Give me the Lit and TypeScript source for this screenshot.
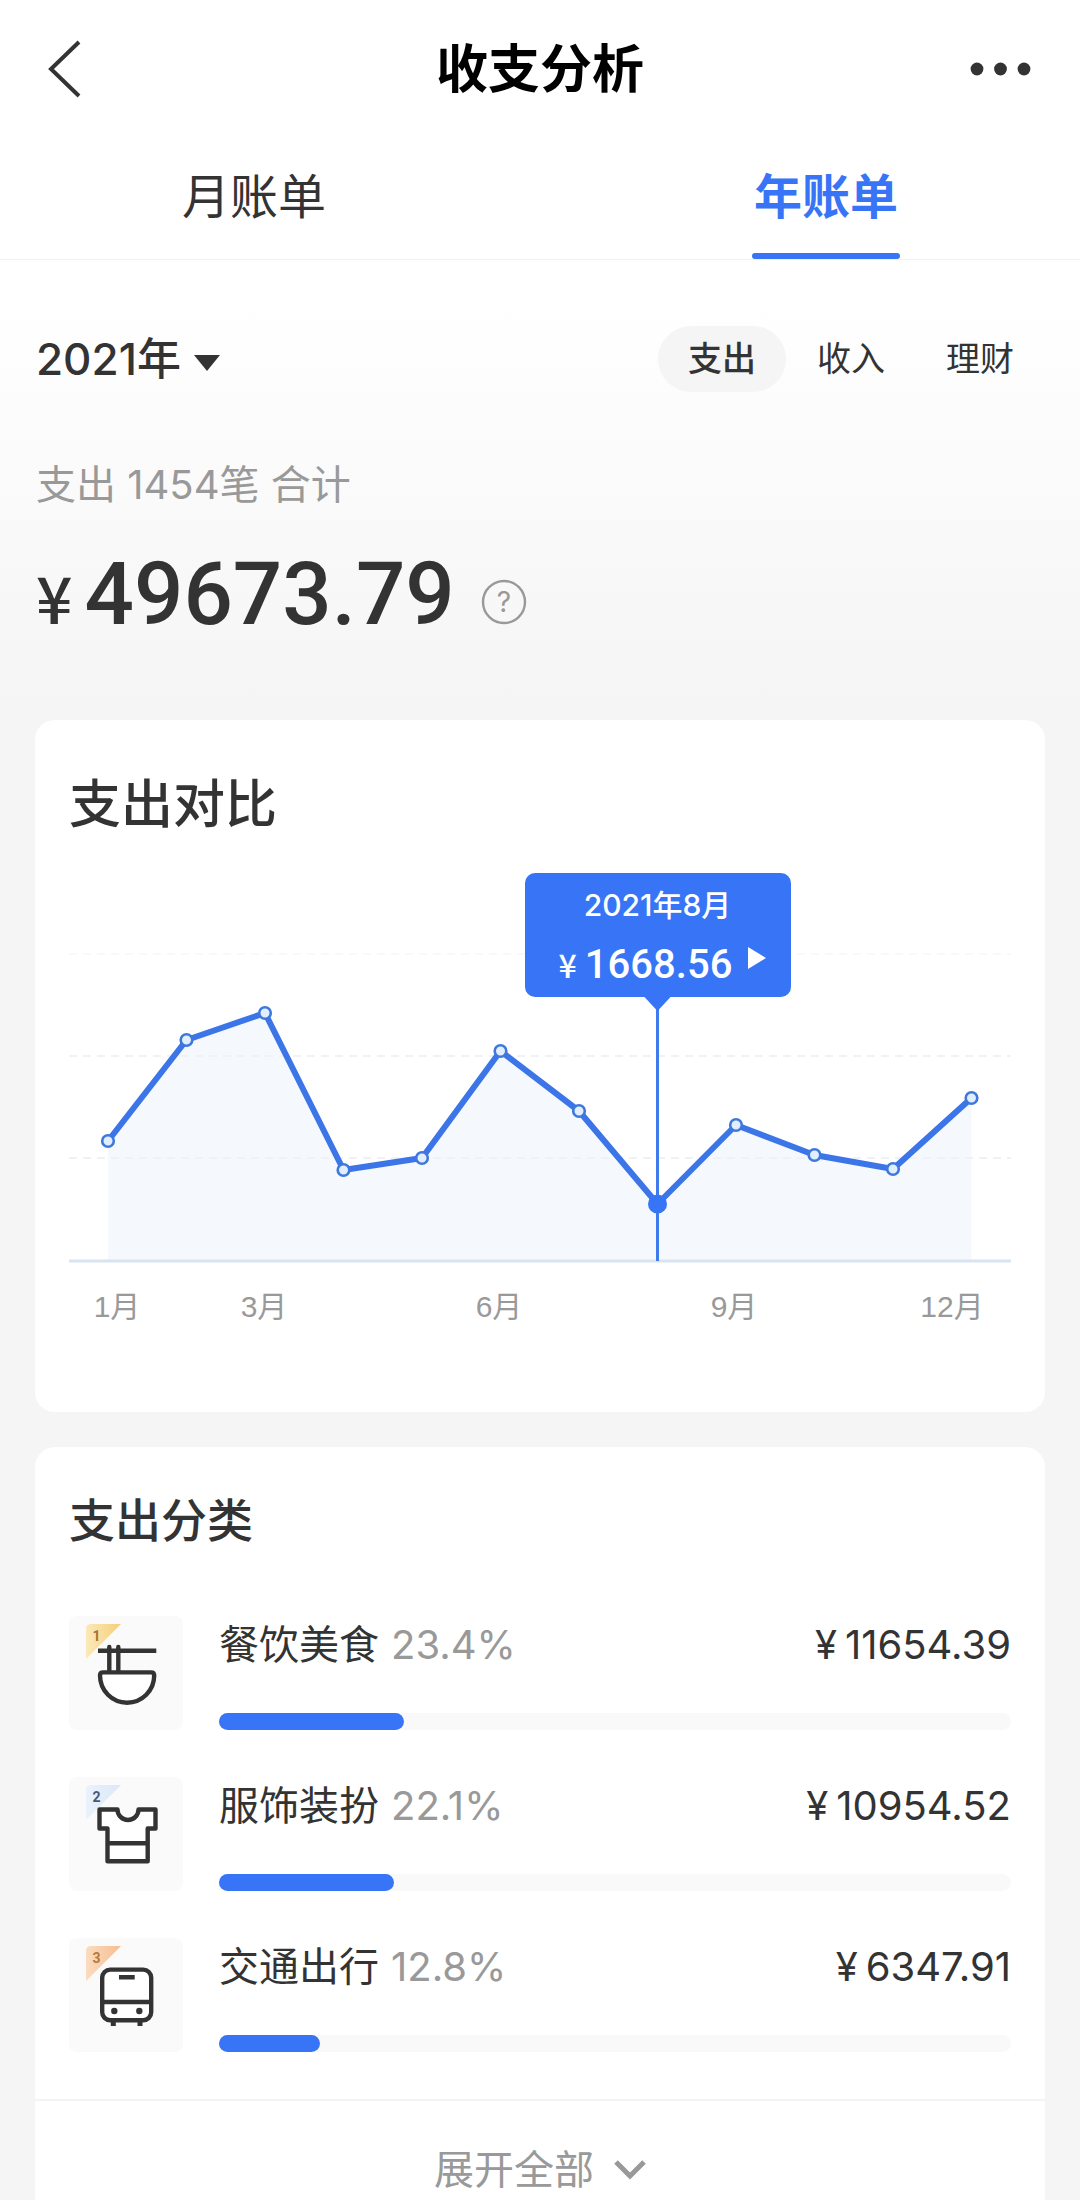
import { LitElement, html, svg, css } from "lit";
import { customElement, property, state } from "lit/decorators.js";
import { classMap } from "lit/directives/class-map.js";

interface Category {
  rank: number;
  name: string;
  percent: number;
  amount: string;
}

const CATEGORIES: Category[] = [
  { rank: 1, name: "餐饮美食", percent: 23.4, amount: "11654.39" },
  { rank: 2, name: "服饰装扮", percent: 22.1, amount: "10954.52" },
  { rank: 3, name: "交通出行", percent: 12.8, amount: "6347.91" },
];

/* Chart geometry, in viewBox units. */
const CHART_W = 942;
const CHART_H = 480;
const AXIS_Y = 408;
const FIRST_X = 39;
const STEP_X = 78.5;
const HEIGHTS = [120, 221, 248, 91, 103, 210, 150, 57, 136, 106, 92, 163];
const LABELS = [
  { text: "1月", x: 48 },
  { text: "3月", x: 195 },
  { text: "6月", x: 430 },
  { text: "9月", x: 665 },
  { text: "12月", x: 883 },
];
const SELECTED = 7;

const BADGES = [
  { from: "#f5cf7a", to: "#fbe9b8", ink: "#a8702f" },
  { from: "#dbe8f8", to: "#eaf2fc", ink: "#46597a" },
  { from: "#f6bd90", to: "#fbdcc0", ink: "#b5793c" },
];

const ICONS = [
  svg`
    <path d="M29 34.7H87.3"/>
    <path d="M40.3 31V56M49.3 31V56" stroke-linecap="round"/>
    <path d="M34 56.4H82Q85.2 56.4 85.2 59.6A27.1 27.1 0 0 1 31 59.6Q31 56.4 34 56.4Z" fill="#fff"/>`,
  svg`
    <path d="M30.5 32.5H48.5A10.5 10.5 0 0 0 69.5 32.5H86.5V51.5H78.7V84.2H38.5V51.5H30.5Z" fill="#fff" stroke-linejoin="round"/>
    <path d="M38.5 66.3H78.7"/>`,
  svg`
    <path d="M44.3 82V88M71 82V88" stroke-width="5"/>
    <rect x="33.2" y="31.6" width="49" height="50.6" rx="8" fill="#fff"/>
    <path d="M33.2 64H82.2M50 39.3H65.7"/>
    <circle cx="45.3" cy="73" r="3.2" fill="#333" stroke="none"/>
    <circle cx="70.3" cy="73" r="3.2" fill="#333" stroke="none"/>`,
];

const FONT = css`Inter, "Noto Sans CJK SC", sans-serif`;
const MONEY = css`Roboto, "Noto Sans CJK SC", sans-serif`;

@customElement("expense-chart")
class ExpenseChart extends LitElement {
  static styles = css`
    :host { display: block; }
    .plot { position: relative; }
    .canvas { display: block; width: 100%; height: auto; }
    .label { font-family: "Liberation Sans", "Noto Sans CJK SC", sans-serif; font-size: 30px; fill: #999; text-anchor: middle; }
    .tip {
      position: absolute;
      top: 20px;
      transform: translateX(-50%);
      display: flex;
      flex-direction: column;
      align-items: center;
      width: 266px;
      height: 124px;
      padding: 8px 0 0;
      border: 0;
      border-radius: 10px;
      background: #3875f6;
      color: #fff;
      font-family: ${FONT};
      cursor: pointer;
    }
    .month { font-size: 30px; font-weight: 500; line-height: 48px; }
    .value { display: flex; align-items: center; gap: 16px; margin-left: 10px; }
    .money {
      display: flex;
      align-items: baseline;
      gap: 8px;
      font-family: ${MONEY};
      font-size: 40px;
      font-weight: 500;
      line-height: 72px;
    }
    .yen { font-family: "Noto Sans CJK SC", sans-serif; font-size: 32px; line-height: 40px; }
    .play { width: 18px; height: 22px; margin-bottom: 14px; }
  `;

  render() {
    const pts = HEIGHTS.map((h, i) => [FIRST_X + STEP_X * i, AXIS_Y - h]);
    const line = pts.map((p) => p.join(",")).join(" ");
    const lastX = pts[pts.length - 1][0];
    const [selX, selY] = pts[SELECTED];
    return html`
      <div class="plot">
        <svg class="canvas" viewBox="0 0 ${CHART_W} ${CHART_H}" role="img" aria-label="支出对比">
          <polygon points="${FIRST_X},${AXIS_Y} ${line} ${lastX},${AXIS_Y}" fill="#f5f9fe"/>
          ${[101, 203, 305].map(
            (y, i) => svg`<path d="M0 ${y}H${CHART_W}" stroke="${i ? "#f0f2f5" : "#f8f9fa"}" stroke-width="2" stroke-dasharray="8 6"/>`
          )}
          <path d="M0 ${AXIS_Y}H${CHART_W}" stroke="#d9e4f2" stroke-width="3"/>
          <path d="M${selX} 144V${AXIS_Y}" stroke="#3f7bea" stroke-width="3"/>
          <polyline points="${line}" fill="none" stroke="#3b75e8" stroke-width="6" stroke-linejoin="round"/>
          ${pts.map(([x, y], i) =>
            i === SELECTED
              ? svg`<circle cx="${x}" cy="${y}" r="9.5" fill="#3875f6"/>`
              : svg`<circle cx="${x}" cy="${y}" r="5.8" fill="#e0eefd" stroke="#3f78dc" stroke-width="2.6"/>`
          )}
          <path d="M${selX - 14} 143H${selX + 14}L${selX} 158Z" fill="#3875f6"/>
          ${LABELS.map((l) => svg`<text class="label" x="${l.x}" y="464">${l.text}</text>`)}
        </svg>
        <button class="tip" style="left:${(selX / CHART_W) * 100}%">
          <span class="month">2021年8月</span>
          <span class="value">
            <span class="money"><span class="yen">¥</span><span>1668.56</span></span>
            <svg class="play" viewBox="0 0 18 22"><path d="M0 0L18 11L0 22Z" fill="#fff"/></svg>
          </span>
        </button>
      </div>
    `;
  }
}

@customElement("category-row")
class CategoryRow extends LitElement {
  @property({ attribute: false }) item!: Category;

  static styles = css`
    :host { display: flex; gap: 36px; font-family: ${FONT}; }
    .icon { flex: none; width: 114px; height: 114px; border-radius: 8px; background: #fafafa; }
    .rank { font-family: Roboto, sans-serif; font-size: 14px; font-weight: 700; text-anchor: middle; }
    .body { flex: 1; display: flex; flex-direction: column; justify-content: space-between; }
    .line { display: flex; align-items: baseline; gap: 12px; font-size: 40px; line-height: 58px; color: #333; }
    .percent { color: #999; }
    .amount { display: flex; gap: 8px; margin-left: auto; }
    .track { height: 17px; border-radius: 9px; background: #f9f9f9; }
    .bar { height: 100%; border-radius: 9px; background: #3875f6; }
  `;

  render() {
    const { rank, name, percent, amount } = this.item;
    const badge = BADGES[rank - 1];
    return html`
      <svg class="icon" viewBox="0 0 114 114" aria-hidden="true">
        <defs>
          <linearGradient id="badge" x1="0" y1="0" x2="1" y2="0">
            <stop offset="0" stop-color="${badge.to}"/>
            <stop offset="1" stop-color="${badge.from}"/>
          </linearGradient>
        </defs>
        <path d="M17 43V13Q17 8 22 8H52Z" fill="url(#badge)"/>
        <text class="rank" x="27.5" y="25" fill="${badge.ink}">${rank}</text>
        <g fill="none" stroke="#333" stroke-width="4.4">${ICONS[rank - 1]}</g>
      </svg>
      <div class="body">
        <div class="line">
          <span>${name}</span>
          <span class="percent">${percent}%</span>
          <span class="amount"><span>¥</span><span>${amount}</span></span>
        </div>
        <div class="track"><div class="bar" style="width:${percent}%"></div></div>
      </div>
    `;
  }
}

@customElement("app-root")
class AppRoot extends LitElement {
  @state() private tab = 1;
  @state() private kind = 0;

  static styles = css`
    :host { display: block; background: #f5f5f5; color: #333; font-family: ${FONT}; }
    button { border: 0; padding: 0; background: none; color: inherit; font: inherit; cursor: pointer; }
    h1, h2, p, ul { margin: 0; padding: 0; }
    svg { display: block; }
    .top { background: #fff; border-bottom: 1px solid #f1f1f1; }
    .nav { display: grid; grid-template-columns: 1fr auto 1fr; align-items: center; height: 138px; padding: 0 48px; }
    .back { justify-self: start; }
    .more { justify-self: end; }
    .title { padding-top: 2px; font-size: 52px; font-weight: 700; line-height: 60px; color: #000; }
    .tabs { display: flex; justify-content: space-between; padding: 0 180px; }
    .tab {
      padding: 29px 2px 26px;
      border-bottom: 6px solid transparent;
      font-size: 48px;
      line-height: 60px;
    }
    .tab.on { position: relative; color: #3875f6; font-weight: 700; }
    .tab.on::after {
      content: "";
      position: absolute;
      inset: auto 0 -6px;
      height: 6px;
      border-radius: 3px;
      background: #3875f6;
    }
    .summary { padding: 66px 36px 0; height: 394px; background: linear-gradient(#fff 40px, #f5f5f5 440px); }
    .filters { display: flex; justify-content: space-between; align-items: center; }
    .year { display: flex; align-items: center; gap: 12px; font-size: 44px; font-weight: 500; line-height: 66px; }
    .caret { margin-top: 8px; }
    .kinds { display: flex; gap: 1px; }
    .kind { padding: 0 30px; border-radius: 33px; font-size: 34px; line-height: 66px; }
    .kind.on { background: #f5f5f5; font-weight: 500; }
    .count { margin-top: 68px; font-size: 40px; line-height: 50px; color: #999; }
    .total { display: flex; align-items: center; gap: 26px; margin-top: 34px; }
    .sum {
      display: flex;
      align-items: baseline;
      gap: 12px;
      font-family: ${MONEY};
      font-size: 87px;
      font-weight: 500;
      line-height: 100px;
    }
    .yen { font-family: "Noto Sans CJK SC", sans-serif; font-size: 64px; line-height: 80px; }
    .help { margin-top: 16px; }
    .mark { font-family: ${FONT}; font-size: 28px; fill: #999; text-anchor: middle; }
    .cards { display: grid; gap: 35px; padding: 0 35px; }
    .card { background: #fff; border-radius: 20px; }
    .compare { padding: 55px 34px 79px; }
    .heading { font-size: 52px; font-weight: 500; line-height: 60px; }
    .compare .heading { margin-bottom: 18px; }
    .classes { padding-top: 43px; border-radius: 20px 20px 0 0; }
    .classes .heading { padding: 0 34px; font-size: 46px; }
    .list { display: grid; gap: 47px; padding: 66px 34px 47px; list-style: none; }
    .all {
      display: flex;
      justify-content: center;
      align-items: center;
      gap: 20px;
      width: 100%;
      padding-top: 39px;
      border-top: 2px solid #f4f4f4;
      font-size: 40px;
      line-height: 60px;
      color: #999;
    }
  `;

  render() {
    return html`
      <header class="top">
        <div class="nav">
          <button class="back" aria-label="返回">
            <svg width="34" height="58" viewBox="0 0 34 58" fill="none" stroke="#333" stroke-width="4">
              <path d="M31 2L3 29L31 56"/>
            </svg>
          </button>
          <h1 class="title">收支分析</h1>
          <button class="more" aria-label="更多">
            <svg width="62" height="14" viewBox="0 0 62 14" fill="#333">
              <circle cx="7" cy="7" r="6.4"/><circle cx="30.5" cy="7" r="6.4"/><circle cx="54" cy="7" r="6.4"/>
            </svg>
          </button>
        </div>
        <nav class="tabs">
          ${["月账单", "年账单"].map(
            (t, i) => html`<button class=${classMap({ tab: true, on: this.tab === i })} @click=${() => (this.tab = i)}>${t}</button>`
          )}
        </nav>
      </header>

      <section class="summary">
        <div class="filters">
          <button class="year">
            <span>2021年</span>
            <svg class="caret" width="28" height="18" viewBox="0 0 28 18"><path d="M1 1H27L14 17Z" fill="#333"/></svg>
          </button>
          <div class="kinds">
            ${["支出", "收入", "理财"].map(
              (t, i) => html`<button class=${classMap({ kind: true, on: this.kind === i })} @click=${() => (this.kind = i)}>${t}</button>`
            )}
          </div>
        </div>
        <p class="count">支出 1454笔 合计</p>
        <div class="total">
          <div class="sum"><span class="yen">¥</span><span>49673.79</span></div>
          <button class="help" aria-label="说明">
            <svg width="46" height="46" viewBox="0 0 46 46">
              <circle cx="23" cy="23" r="21" fill="none" stroke="#999" stroke-width="2.4"/>
              <text class="mark" x="23" y="33">?</text>
            </svg>
          </button>
        </div>
      </section>

      <main class="cards">
        <section class="card compare">
          <h2 class="heading">支出对比</h2>
          <expense-chart></expense-chart>
        </section>
        <section class="card classes">
          <h2 class="heading">支出分类</h2>
          <ul class="list">
            ${CATEGORIES.map((c) => html`<li><category-row .item=${c}></category-row></li>`)}
          </ul>
          <button class="all">
            <span>展开全部</span>
            <svg width="32" height="24" viewBox="0 0 32 24" fill="none" stroke="#999" stroke-width="5">
              <path d="M2 4L16 18L30 4"/>
            </svg>
          </button>
        </section>
      </main>
    `;
  }
}
